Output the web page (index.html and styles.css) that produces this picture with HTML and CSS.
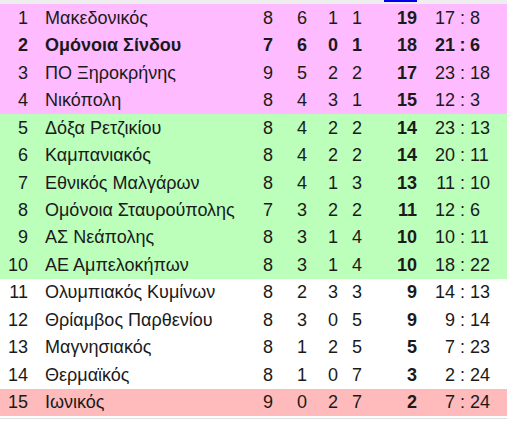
FILE: index.html
```html
<!DOCTYPE html>
<html lang="el">
<head>
<meta charset="utf-8">
<title>Βαθμολογία</title>
<link rel="stylesheet" href="styles.css">
</head>
<body>
<div class="topband"><span class="tab-mark"></span></div>
<table class="standings">
<colgroup>
<col class="c-rank"><col class="c-name"><col class="c-p"><col class="c-w"><col class="c-d"><col class="c-l"><col class="c-pts"><col class="c-gf"><col class="c-colon"><col class="c-ga">
</colgroup>
<tbody>
<tr class="pink"><td class="rank">1</td><td class="name">Μακεδονικός</td><td class="num">8</td><td class="num">6</td><td class="num">1</td><td class="num">1</td><td class="pts">19</td><td class="gf">17</td><td class="colon">:</td><td class="ga">8</td></tr>
<tr class="pink bold"><td class="rank">2</td><td class="name">Ομόνοια Σίνδου</td><td class="num">7</td><td class="num">6</td><td class="num">0</td><td class="num">1</td><td class="pts">18</td><td class="gf">21</td><td class="colon">:</td><td class="ga">6</td></tr>
<tr class="pink"><td class="rank">3</td><td class="name">ΠΟ Ξηροκρήνης</td><td class="num">9</td><td class="num">5</td><td class="num">2</td><td class="num">2</td><td class="pts">17</td><td class="gf">23</td><td class="colon">:</td><td class="ga">18</td></tr>
<tr class="pink"><td class="rank">4</td><td class="name">Νικόπολη</td><td class="num">8</td><td class="num">4</td><td class="num">3</td><td class="num">1</td><td class="pts">15</td><td class="gf">12</td><td class="colon">:</td><td class="ga">3</td></tr>
<tr class="green"><td class="rank">5</td><td class="name">Δόξα Ρετζικίου</td><td class="num">8</td><td class="num">4</td><td class="num">2</td><td class="num">2</td><td class="pts">14</td><td class="gf">23</td><td class="colon">:</td><td class="ga">13</td></tr>
<tr class="green"><td class="rank">6</td><td class="name">Καμπανιακός</td><td class="num">8</td><td class="num">4</td><td class="num">2</td><td class="num">2</td><td class="pts">14</td><td class="gf">20</td><td class="colon">:</td><td class="ga">11</td></tr>
<tr class="green"><td class="rank">7</td><td class="name">Εθνικός Μαλγάρων</td><td class="num">8</td><td class="num">4</td><td class="num">1</td><td class="num">3</td><td class="pts">13</td><td class="gf">11</td><td class="colon">:</td><td class="ga">10</td></tr>
<tr class="green"><td class="rank">8</td><td class="name">Ομόνοια Σταυρούπολης</td><td class="num">7</td><td class="num">3</td><td class="num">2</td><td class="num">2</td><td class="pts">11</td><td class="gf">12</td><td class="colon">:</td><td class="ga">6</td></tr>
<tr class="green"><td class="rank">9</td><td class="name">ΑΣ Νεάπολης</td><td class="num">8</td><td class="num">3</td><td class="num">1</td><td class="num">4</td><td class="pts">10</td><td class="gf">10</td><td class="colon">:</td><td class="ga">11</td></tr>
<tr class="green"><td class="rank">10</td><td class="name">ΑΕ Αμπελοκήπων</td><td class="num">8</td><td class="num">3</td><td class="num">1</td><td class="num">4</td><td class="pts">10</td><td class="gf">18</td><td class="colon">:</td><td class="ga">22</td></tr>
<tr><td class="rank">11</td><td class="name">Ολυμπιακός Κυμίνων</td><td class="num">8</td><td class="num">2</td><td class="num">3</td><td class="num">3</td><td class="pts">9</td><td class="gf">14</td><td class="colon">:</td><td class="ga">13</td></tr>
<tr><td class="rank">12</td><td class="name">Θρίαμβος Παρθενίου</td><td class="num">8</td><td class="num">3</td><td class="num">0</td><td class="num">5</td><td class="pts">9</td><td class="gf">9</td><td class="colon">:</td><td class="ga">14</td></tr>
<tr><td class="rank">13</td><td class="name">Μαγνησιακός</td><td class="num">8</td><td class="num">1</td><td class="num">2</td><td class="num">5</td><td class="pts">5</td><td class="gf">7</td><td class="colon">:</td><td class="ga">23</td></tr>
<tr><td class="rank">14</td><td class="name">Θερμαϊκός</td><td class="num">8</td><td class="num">1</td><td class="num">0</td><td class="num">7</td><td class="pts">3</td><td class="gf">2</td><td class="colon">:</td><td class="ga">24</td></tr>
<tr class="red"><td class="rank">15</td><td class="name">Ιωνικός</td><td class="num">9</td><td class="num">0</td><td class="num">2</td><td class="num">7</td><td class="pts">2</td><td class="gf">7</td><td class="colon">:</td><td class="ga">24</td></tr>
</tbody>
</table>
<div class="bottomline"></div>
</body>
</html>
```

FILE: styles.css
```css
html, body {
  margin: 0;
  padding: 0;
  background: #ffffff;
}
body {
  font-family: "Liberation Sans", Arial, sans-serif;
  font-size: 18px;
  color: #1a1a1a;
}
.topband {
  height: 4px;
  background: #eeeeee;
  position: relative;
}
.tab-mark {
  position: absolute;
  left: 384px;
  top: 0;
  width: 33px;
  height: 2px;
  background: #0000ee;
}
.standings {
  width: 507px;
  table-layout: fixed;
  border-collapse: collapse;
}
.standings td {
  padding: 0;
  height: 27.47px;
  white-space: nowrap;
  line-height: 20px;
}
.c-rank { width: 32px; }
.c-name { width: 221px; }
.c-p { width: 30px; }
.c-w { width: 38px; }
.c-d { width: 24px; }
.c-l { width: 24px; }
.c-pts { width: 48px; }
.c-gf { width: 38px; }
.c-colon { width: 15px; }
.c-ga { width: auto; }
.rank { text-align: right; padding-right: 4px !important; }
.name { padding-left: 13px !important; }
.num { text-align: center; }
.pts { text-align: right; font-weight: bold; }
.gf { text-align: right; }
.colon { text-align: center; }
.ga { text-align: left; }
.pink { background: #ffbbff; }
.green { background: #bbffbb; }
.red { background: #ffbbbb; }
.bold td { font-weight: bold; }
.bottomline {
  margin-top: 2px;
  height: 1px;
  background: #dddddd;
}
```
